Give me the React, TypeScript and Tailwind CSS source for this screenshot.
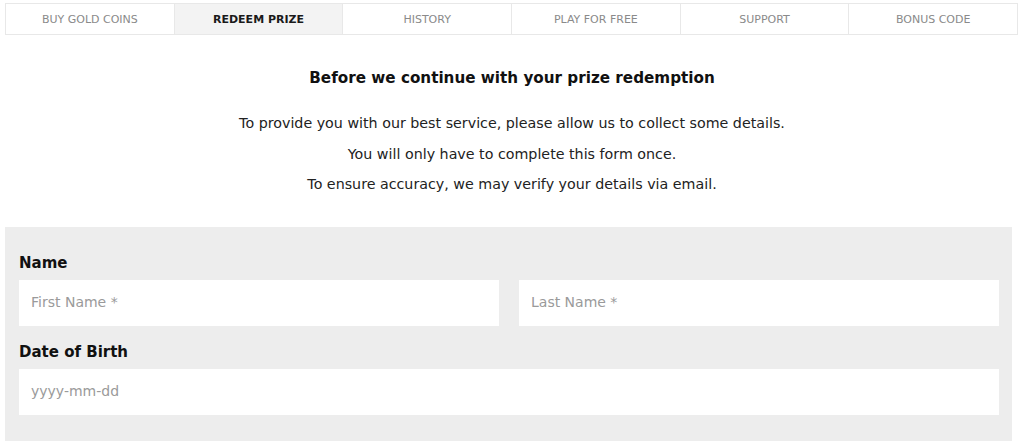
import React from "react";

const tabs = ["BUY GOLD COINS", "REDEEM PRIZE", "HISTORY", "PLAY FOR FREE", "SUPPORT", "BONUS CODE"];

export default function App() {
  return (
    <div className="w-[1024px] h-[441px] overflow-hidden bg-white" style={{ fontFamily: '"DejaVu Sans", "Open Sans", sans-serif' }}>
      <div className="ml-[5px] mt-[3px] flex w-[1013px] h-[32px] border border-[#e8e8e8]">
        {tabs.map((t, i) => (
          <div
            key={t}
            className={
              "flex-1 flex items-center justify-center pt-[2px] text-[11px] " +
              (i > 0 ? "border-l border-[#e8e8e8] " : "") +
              (i === 1 ? "bg-[#f3f3f3] text-[#1a1a1a] font-bold" : "text-[#8a8a8a]")
            }
          >
            {t}
          </div>
        ))}
      </div>
      <h1 className="mt-[31px] text-center text-[15.2px] leading-[24px] font-bold text-[#111]">
        Before we continue with your prize redemption
      </h1>
      <div className="mt-[18px] text-center text-[14.25px] leading-[30.5px] text-[#222]">
        <p>To provide you with our best service, please allow us to collect some details.</p>
        <p>You will only have to complete this form once.</p>
        <p>To ensure accuracy, we may verify your details via email.</p>
      </div>
      <div className="mt-[27px] ml-[5px] w-[1007px] h-[300px] bg-[#ededed] pl-[14px] pr-[13px] pt-[26.5px]">
        <div className="text-[15px] leading-[20px] font-bold text-[#111] mb-[6.5px]">Name</div>
        <div className="flex gap-[20px]">
          <div className="flex-1 h-[46px] bg-white flex items-center pl-[12px] text-[14px] text-[#9a9a9a]">First Name *</div>
          <div className="flex-1 h-[46px] bg-white flex items-center pl-[12px] text-[14px] text-[#9a9a9a]">Last Name *</div>
        </div>
        <div className="mt-[16.5px] text-[15px] leading-[20px] font-bold text-[#111] mb-[6.5px]">Date of Birth</div>
        <div className="h-[46px] bg-white flex items-center pl-[12px] text-[14px] text-[#9a9a9a]">yyyy-mm-dd</div>
      </div>
    </div>
  );
}
